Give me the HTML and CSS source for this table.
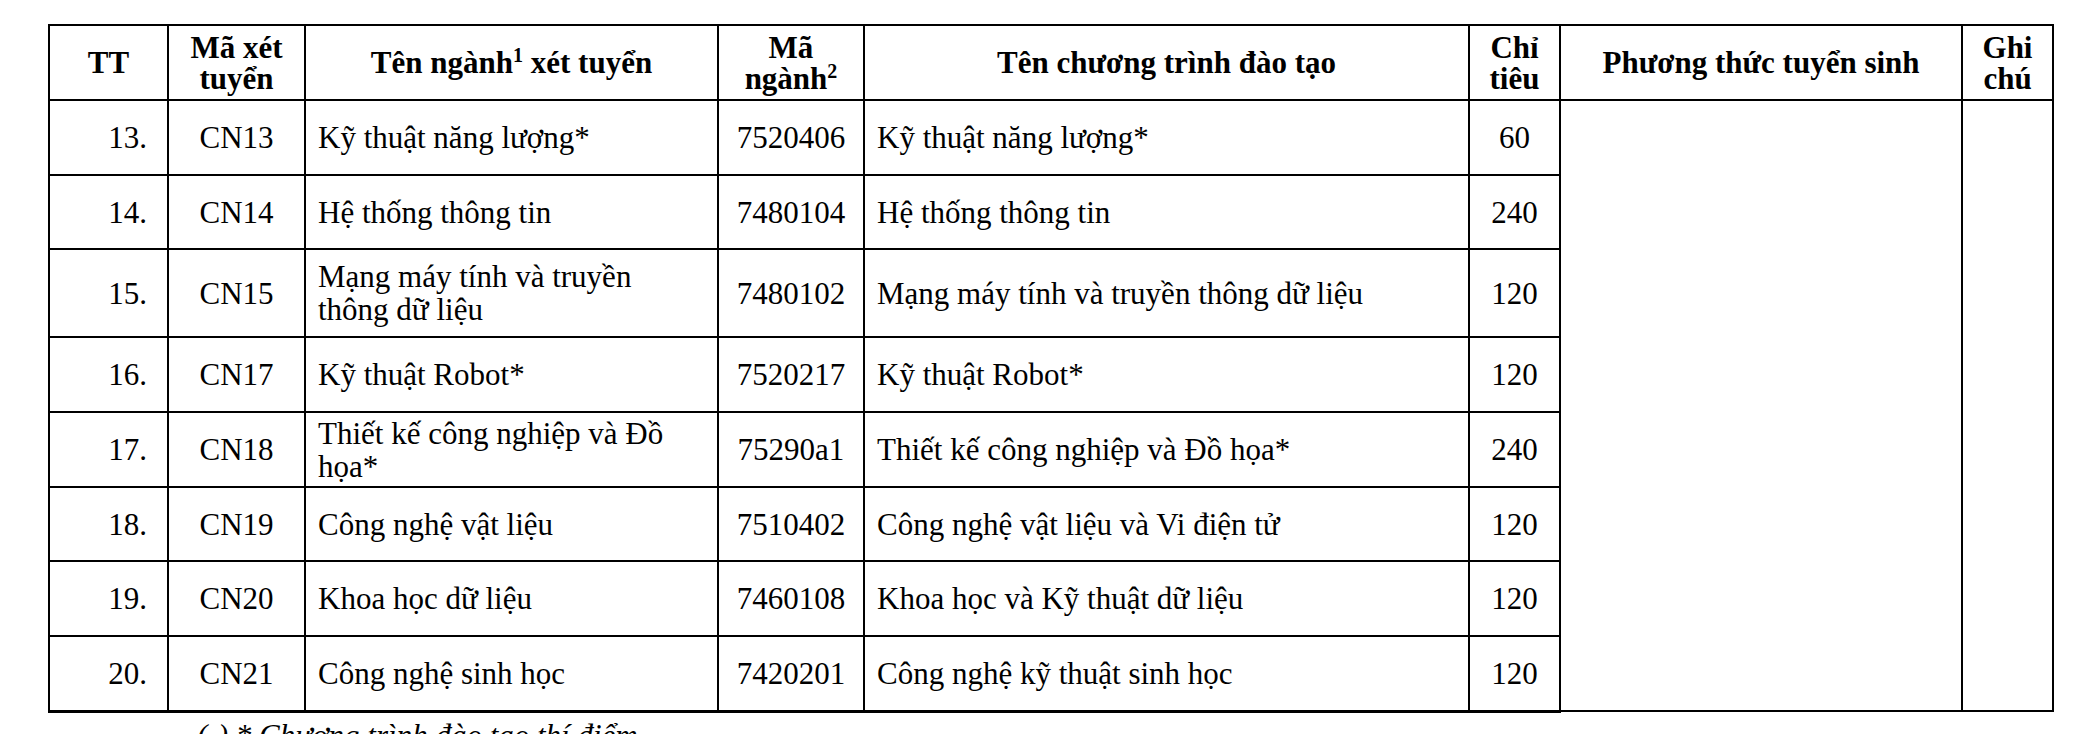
FILE: index.html
```html
<!DOCTYPE html>
<html lang="vi">
<head>
<meta charset="utf-8">
<title>Bảng ngành xét tuyển</title>
<link rel="stylesheet" href="styles.css">
</head>
<body>
<table class="grid">
  <colgroup>
    <col class="c-tt">
    <col class="c-ma">
    <col class="c-ten">
    <col class="c-mn">
    <col class="c-ct">
    <col class="c-chi">
    <col class="c-pt">
    <col class="c-gc">
  </colgroup>
  <thead>
    <tr class="r-head">
      <th>TT</th>
      <th>Mã xét<br>tuyển</th>
      <th>Tên ngành<sup>1</sup> xét tuyển</th>
      <th>Mã<br>ngành<sup>2</sup></th>
      <th>Tên chương trình đào tạo</th>
      <th>Chỉ<br>tiêu</th>
      <th>Phương thức tuyển sinh</th>
      <th>Ghi<br>chú</th>
    </tr>
  </thead>
  <tbody>
    <tr class="r75">
      <td class="tt">13.</td>
      <td class="ctr">CN13</td>
      <td class="txt">Kỹ thuật năng lượng*</td>
      <td class="ctr">7520406</td>
      <td class="txt">Kỹ thuật năng lượng*</td>
      <td class="ctr">60</td>
      <td class="blank" rowspan="8"></td>
      <td class="blank" rowspan="8"></td>
    </tr>
    <tr class="r74">
      <td class="tt">14.</td>
      <td class="ctr">CN14</td>
      <td class="txt">Hệ thống thông tin</td>
      <td class="ctr">7480104</td>
      <td class="txt">Hệ thống thông tin</td>
      <td class="ctr">240</td>
    </tr>
    <tr class="r88">
      <td class="tt">15.</td>
      <td class="ctr">CN15</td>
      <td class="txt">Mạng máy tính và truyền<br>thông dữ liệu</td>
      <td class="ctr">7480102</td>
      <td class="txt">Mạng máy tính và truyền thông dữ liệu</td>
      <td class="ctr">120</td>
    </tr>
    <tr class="r75">
      <td class="tt">16.</td>
      <td class="ctr">CN17</td>
      <td class="txt">Kỹ thuật Robot*</td>
      <td class="ctr">7520217</td>
      <td class="txt">Kỹ thuật Robot*</td>
      <td class="ctr">120</td>
    </tr>
    <tr class="r75">
      <td class="tt">17.</td>
      <td class="ctr">CN18</td>
      <td class="txt">Thiết kế công nghiệp và Đồ<br>họa*</td>
      <td class="ctr">75290a1</td>
      <td class="txt">Thiết kế công nghiệp và Đồ họa*</td>
      <td class="ctr">240</td>
    </tr>
    <tr class="r74">
      <td class="tt">18.</td>
      <td class="ctr">CN19</td>
      <td class="txt">Công nghệ vật liệu</td>
      <td class="ctr">7510402</td>
      <td class="txt">Công nghệ vật liệu và Vi điện tử</td>
      <td class="ctr">120</td>
    </tr>
    <tr class="r75">
      <td class="tt">19.</td>
      <td class="ctr">CN20</td>
      <td class="txt">Khoa học dữ liệu</td>
      <td class="ctr">7460108</td>
      <td class="txt">Khoa học và Kỹ thuật dữ liệu</td>
      <td class="ctr">120</td>
    </tr>
    <tr class="r75 last">
      <td class="tt">20.</td>
      <td class="ctr">CN21</td>
      <td class="txt">Công nghệ sinh học</td>
      <td class="ctr">7420201</td>
      <td class="txt">Công nghệ kỹ thuật sinh học</td>
      <td class="ctr">120</td>
    </tr>
  </tbody>
</table>
<p class="note">(-) * Chương trình đào tạo thí điểm</p>
</body>
</html>
```

FILE: styles.css
```css
html, body {
  margin: 0;
  padding: 0;
  background: #ffffff;
}

body {
  font-family: "Liberation Serif", "Times New Roman", serif;
  color: #000000;
  overflow: hidden;
  height: 734px;
}

.grid {
  border-collapse: collapse;
  table-layout: fixed;
  width: 2006px;
  margin: 24px 0 0 48px;
  font-size: 31px;
  line-height: 33px;
}

.c-tt { width: 119px; }
.c-ma { width: 137px; }
.c-ten { width: 413px; }
.c-mn { width: 146px; }
.c-ct { width: 605px; }
.c-chi { width: 91px; }
.c-pt { width: 402px; }
.c-gc { width: 91px; }

.grid th,
.grid td {
  border: 2px solid #000000;
  padding: 0;
  vertical-align: middle;
  overflow: hidden;
  white-space: nowrap;
}

.grid th {
  font-weight: bold;
  text-align: center;
  line-height: 31px;
}

.grid sup {
  font-size: 20px;
  line-height: 0;
  vertical-align: 11px;
}

.r-head { height: 75px; }
.r75 { height: 75px; }
.r74 { height: 74px; }
.r88 { height: 88px; }

.grid .last td { border-bottom-width: 3px; }

.tt {
  text-align: right;
  padding-right: 20px !important;
}

.ctr { text-align: center; }

.txt {
  text-align: left;
  padding-left: 12px !important;
}

.note {
  margin: 6px 0 0 197px;
  font-style: italic;
  font-size: 31px;
  line-height: 33px;
}
```
